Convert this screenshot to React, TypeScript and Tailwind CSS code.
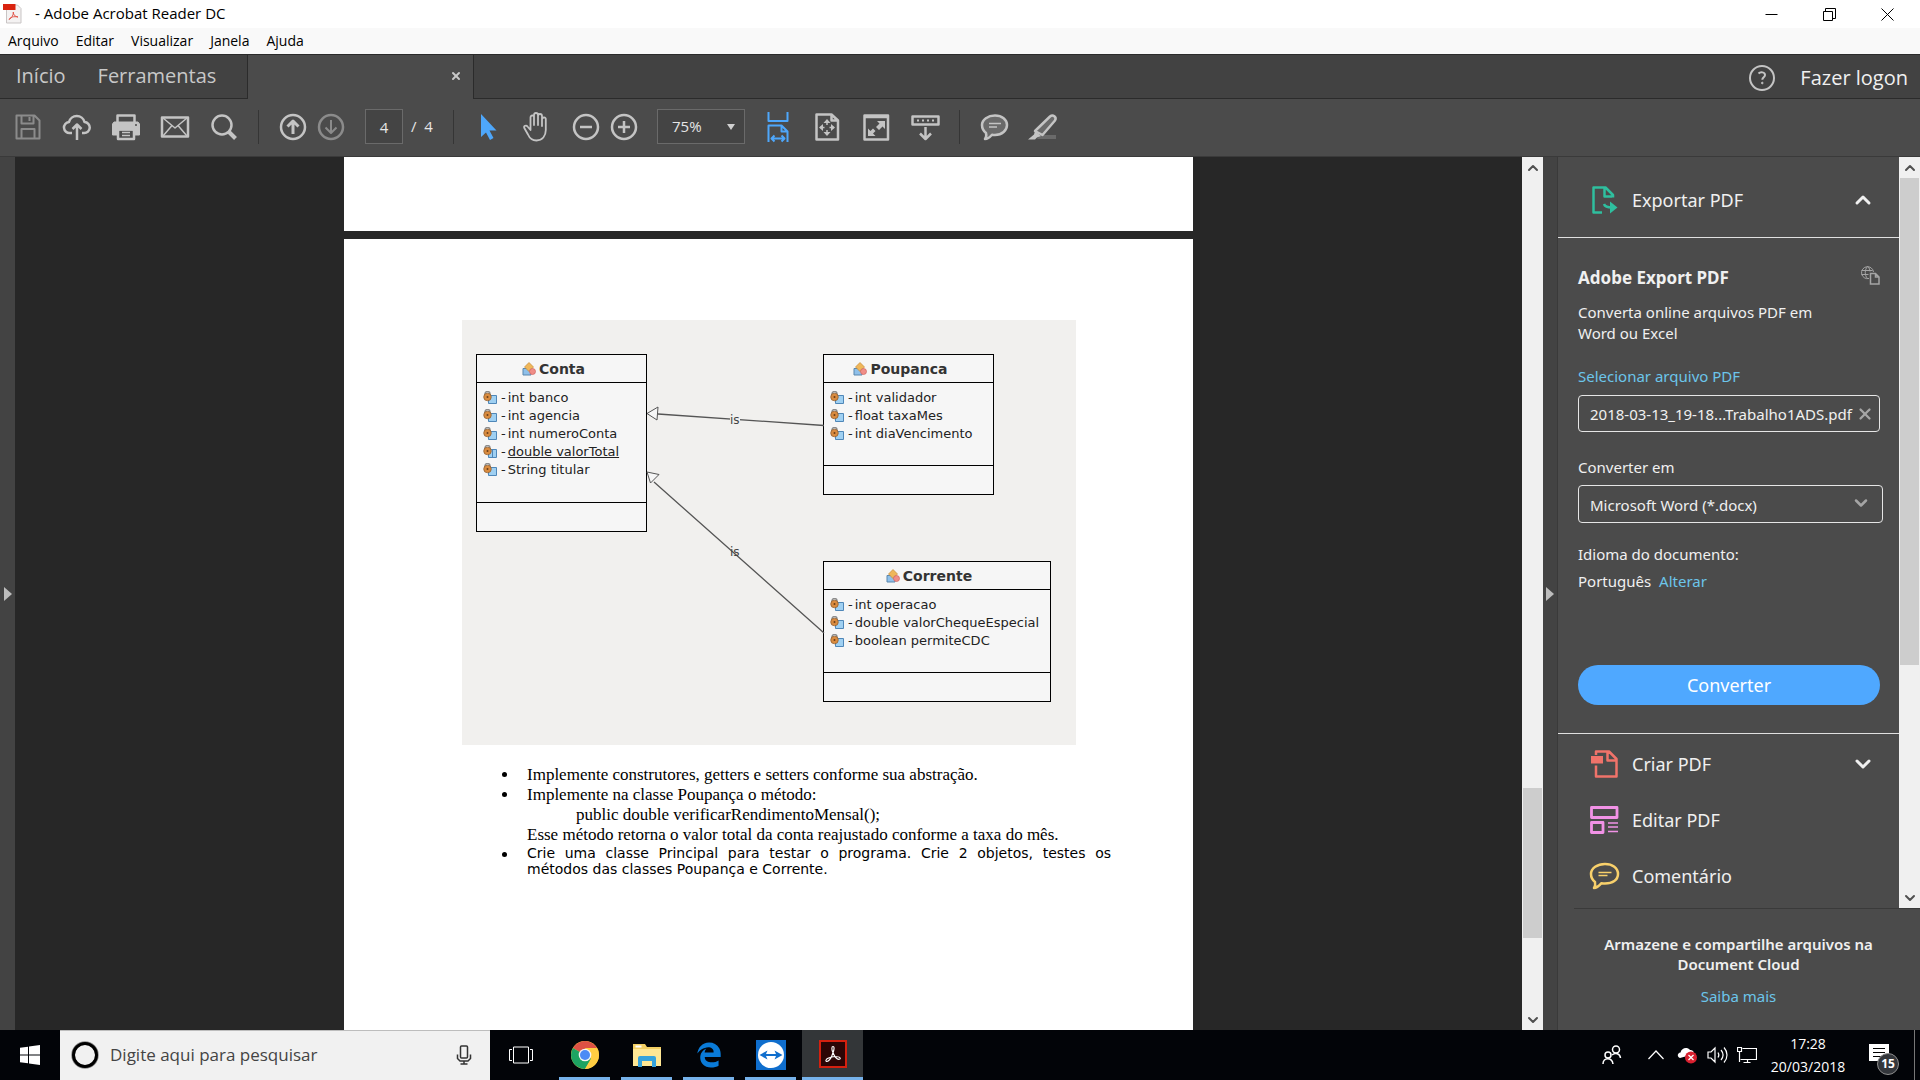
import type { ReactNode } from "react";
import { ChevronDown, ChevronUp, X } from "lucide-react";
import { FaEdgeLegacy } from "react-icons/fa";

type IconProps = { children: ReactNode; className?: string };

function Icon({ children, className = "size-8" }: IconProps) {
  return (
    <svg viewBox="0 0 32 32" className={className} fill="none" stroke="currentColor" strokeWidth="2" strokeLinejoin="round" aria-hidden="true">
      {children}
    </svg>
  );
}

function ToolButton({ label, children, className = "text-[#c4c4c4]" }: { label: string; children: ReactNode; className?: string }) {
  return (
    <button type="button" aria-label={label} className={`size-8 shrink-0 ${className}`}>
      <Icon>{children}</Icon>
    </button>
  );
}

function Separator() {
  return <div className="mx-[18px] h-[34px] w-px shrink-0 bg-[#353535]" />;
}

const menus = ["Arquivo", "Editar", "Visualizar", "Janela", "Ajuda"];

function TitleBar() {
  return (
    <header className="shrink-0 font-['Open_Sans',sans-serif] text-sm text-black">
      <div className="flex h-7 items-center bg-white">
        <svg viewBox="0 0 20 20" className="ml-[3px] size-5" fill="none" aria-hidden="true">
          <path d="M3.500 1h11l3.500 3.500v14.500h-14.500z" fill="#f4f2f2" stroke="#c9c5c5" />
          <path d="M0 0h12.500v6H0z" fill="#d9230f" />
          <path d="M6 15.500c3-1.500 4.500-4.500 4.300-7.500M6 15.500c1-2.500 5-3.300 9-2.500-3-.5-4.700-2-4.700-5" stroke="#e2574c" />
        </svg>
        <h1 className="ml-3 text-[15px]">- Adobe Acrobat Reader DC</h1>
        <div className="mr-1 ml-auto flex">
          <button type="button" aria-label="Minimizar" className="grid h-7 w-[58px] place-items-center">
            <svg viewBox="0 0 13 13" className="size-[13px]" stroke="currentColor" aria-hidden="true"><path d="M0.500 6.500h12" /></svg>
          </button>
          <button type="button" aria-label="Restaurar" className="grid h-7 w-[58px] place-items-center">
            <svg viewBox="0 0 13 13" className="size-[13px]" fill="none" stroke="currentColor" aria-hidden="true">
              <path d="M0.500 3.500h9v9h-9zM2.500 3.500v-3h10v10h-3" />
            </svg>
          </button>
          <button type="button" aria-label="Fechar" className="grid h-7 w-[58px] place-items-center">
            <svg viewBox="0 0 13 13" className="size-[13px]" stroke="currentColor" aria-hidden="true"><path d="M0.500 0.500l12 12M12.500 0.500l-12 12" /></svg>
          </button>
        </div>
      </div>
      <nav className="flex h-[26px] items-center gap-[17px] bg-[#f9f9f9] pl-2">
        {menus.map((menu) => (
          <button key={menu} type="button">{menu}</button>
        ))}
      </nav>
    </header>
  );
}

function TabBar() {
  return (
    <div className="flex h-[45px] shrink-0 border-t border-[#2b2b2b] bg-[#424242] font-['Open_Sans',sans-serif] text-xl text-[#c8c8c8]">
      <div className="flex w-[248px] items-center gap-8 border-r border-b border-[#2b2b2b] pl-4 pb-0.5">
        <button type="button">Início</button>
        <button type="button">Ferramentas</button>
      </div>
      <div className="flex w-[225px] items-center justify-end bg-[#4b4b4b] pr-[11px] pb-0.5">
        <button type="button" aria-label="Fechar guia"><X className="size-3" strokeWidth={4} /></button>
      </div>
      <div className="flex flex-1 items-center justify-end border-b border-l border-[#2b2b2b] pt-0.5 pr-3 text-[#f0f0f0]">
        <button type="button" aria-label="Ajuda" className="mr-6 text-[#c4c4c4]">
          <svg viewBox="0 0 28 28" className="size-7" fill="none" stroke="currentColor" strokeWidth="2" aria-hidden="true">
            <circle cx="14" cy="14" r="12" />
            <path d="M10.500 9.500c2-2 6.500-1.500 6.500 1.500 0 2.200-2.700 2.300-2.700 4.800" />
            <circle cx="14.300" cy="19" r="0.800" fill="currentColor" strokeWidth="1" />
          </svg>
        </button>
        <button type="button" className="font-medium">Fazer logon</button>
      </div>
    </div>
  );
}

function Toolbar() {
  return (
    <div className="flex h-[58px] shrink-0 items-center border-b border-[#3a3a3a] bg-[#4b4b4b] pb-0.5 pl-3 font-['Open_Sans',sans-serif] text-base text-[#e6e6e6]">
      <div className="flex gap-[17px]">
        <ToolButton label="Salvar" className="text-[#8b8b8b]">
          <path d="M4.500 4.500h18l5 5v18h-23zM9.500 4.500v8h12v-8M17.500 6v4M9.500 27v-9h13v9" />
        </ToolButton>
        <ToolButton label="Enviar para a nuvem">
          <path d="M11 22H9a5.500 5.500 0 0 1-1-11 8 8 0 0 1 15.500 0A5.500 5.500 0 0 1 23 22h-2M16 29V14M11.500 18l4.500-4.500 4.500 4.500" strokeWidth="2.500" />
        </ToolButton>
        <ToolButton label="Imprimir">
          <path d="M7.500 11V4.500h17V11" strokeWidth="2.500" />
          <path d="M4 11h24l1.500 2v11H25v-5H7v5H2.500V13z" fill="currentColor" strokeWidth="1" />
          <path d="M8 18.500h16v9.500H8z" strokeWidth="2.500" />
          <path d="M12 21.500h8M12 24.500h8" strokeWidth="1.500" />
          <circle cx="26" cy="14" r="1" fill="#4b4b4b" stroke="none" />
        </ToolButton>
        <ToolButton label="E-mail">
          <path d="M3 6.500h26v19H3z" strokeWidth="2.500" />
          <path d="M4 7l12 10L28 7M4 25l9-10.500M28 25l-9-10.500" strokeWidth="1.500" />
        </ToolButton>
        <ToolButton label="Procurar">
          <circle cx="14" cy="14" r="9.500" strokeWidth="2.500" />
          <path d="M20.500 20.500l7 7" strokeWidth="4" />
        </ToolButton>
      </div>
      <Separator />
      <div className="flex gap-1.5">
        <ToolButton label="Página anterior">
          <circle cx="16" cy="16" r="12" strokeWidth="2.500" />
          <path d="M16 23V10M10.500 15.500L16 10l5.500 5.500" strokeWidth="3" />
        </ToolButton>
        <ToolButton label="Próxima página" className="text-[#8b8b8b]">
          <circle cx="16" cy="16" r="12" strokeWidth="2.500" />
          <path d="M16 9v13M10.500 16.500L16 22l5.500-5.500" />
        </ToolButton>
      </div>
      <input aria-label="Página" defaultValue="4" className="ml-[18px] h-[35px] w-[38px] border border-[#6a6a6a] bg-[#444] text-center text-[15px]" />
      <span className="ml-2 w-6 text-[15px] whitespace-pre">/  4</span>
      <Separator />
      <div className="flex gap-[17px]">
        <ToolButton label="Selecionar" className="text-[#4ea7fb]">
          <path d="M9 3v23l5-4.500 4 7.500 3.500-2-4-7.500h7z" fill="currentColor" stroke="none" />
        </ToolButton>
        <ToolButton label="Mão">
          <path d="M9.500 19V6.500q0-2 1.800-2t1.700 2V14V4q0-2 2-2t2 2v10V5q0-2 2-2t2 2v10V8.500q0-2 2-2t1.800 2V19c0 6-3.500 10.500-9.300 10.500-5 0-7-2.500-8.500-6L3.300 17c-.9-2.200 1.900-3.300 3.200-1.500z" strokeWidth="1.800" />
        </ToolButton>
      </div>
      <div className="ml-[17px] flex gap-1.5">
        <ToolButton label="Reduzir">
          <circle cx="16" cy="16" r="12" strokeWidth="2.500" />
          <path d="M10 16h12" strokeWidth="2.500" />
        </ToolButton>
        <ToolButton label="Ampliar">
          <circle cx="16" cy="16" r="12" strokeWidth="2.500" />
          <path d="M10 16h12M16 10v12" strokeWidth="2.500" />
        </ToolButton>
      </div>
      <div className="relative ml-[17px]">
        <select aria-label="Zoom" className="h-[35px] w-[88px] appearance-none border border-[#6a6a6a] bg-[#444] pl-3.5 text-[15px]">
          <option>75%</option>
        </select>
        <svg viewBox="0 0 8 6" className="pointer-events-none absolute top-[15px] right-2.5 h-1.5 w-2 text-[#d0d0d0]" aria-hidden="true"><path d="M0 0h8L4 6z" fill="currentColor" /></svg>
      </div>
      <div className="ml-[17px] flex gap-[17px]">
        <ToolButton label="Ajustar à largura" className="text-[#4ea7fb]">
          <path d="M6.500 1v9h19V1M6.500 31V14.500h13l6 6V31M19.500 14.500v6h6M10 27.500h12M12.500 24.500l-3 3 3 3M19.500 24.500l3 3-3 3" />
        </ToolButton>
        <ToolButton label="Ajustar página">
          <path d="M5.500 3.500h15l6.500 6v19H5.500zM20.500 3.500v6H27" strokeWidth="2.500" />
          <path d="M16 10v13M9.500 16.500h13" strokeWidth="1.500" strokeDasharray="4 5" />
          <path d="M16 8l3.500 4h-7zM16 25l3.500-4h-7zM8 16.500l4-3.500v7zM24 16.500L20 13v7z" fill="currentColor" stroke="none" />
        </ToolButton>
        <ToolButton label="Tela cheia">
          <path d="M4.500 4.500h23.500v24H4.500zM5 6h23" strokeWidth="2.500" />
          <path d="M17 10h8v8l-2.500-2.500-3.500 3.500-3-3 3.500-3.500zM8 17.500l2.500 2.500 2.500-2.500 2.500 2.500-2.500 2.500 2.500 2.500H8z" fill="currentColor" stroke="none" />
        </ToolButton>
        <ToolButton label="Modo de leitura">
          <path d="M3.500 5.500h26v8h-26z" strokeWidth="2.500" />
          <path d="M8 9.500h18" strokeDasharray="2 3" />
          <path d="M16.500 16v12M11 22.500l5.500 5.500 5.500-5.500" strokeWidth="2.500" />
        </ToolButton>
      </div>
      <Separator />
      <div className="flex gap-[17px]">
        <ToolButton label="Adicionar comentário">
          <path d="M17 4.500c7 0 12 4 12 9.500s-5 10-12 10c-1 0-2 0-3-.3C12 26 9.500 28 7 28c1.200-1.500 1.500-4 1-6C5.500 20 4 17 4 14c0-5.500 6-9.500 13-9.500z" fill="#6a6a6a" strokeWidth="2.500" />
          <path d="M11 12.500h12M11 16h8" strokeWidth="1.500" />
        </ToolButton>
        <ToolButton label="Realçar">
          <path d="M13 24h16v4H10z" fill="#6a6a6a" stroke="none" />
          <path d="M8 20L23 5.500c3-2.500 7 .500 5 4L15.500 24z" fill="#6a6a6a" strokeWidth="2.500" />
          <path d="M8 20l6 5-4 1.500-2 2H1l6-5z" fill="currentColor" stroke="none" />
        </ToolButton>
      </div>
    </div>
  );
}

type UmlClass = { name: string; box: string; fields: { text: string; isStatic?: boolean }[] };

const classes: UmlClass[] = [
  {
    name: "Conta",
    box: "left-3.5 top-[34px] w-[171px] h-[178px]",
    fields: [
      { text: "int banco" },
      { text: "int agencia" },
      { text: "int numeroConta" },
      { text: "double valorTotal", isStatic: true },
      { text: "String titular" },
    ],
  },
  {
    name: "Poupanca",
    box: "left-[361px] top-[34px] w-[171px] h-[141px]",
    fields: [{ text: "int validador" }, { text: "float taxaMes" }, { text: "int diaVencimento" }],
  },
  {
    name: "Corrente",
    box: "left-[361px] top-[241px] w-[228px] h-[141px]",
    fields: [{ text: "int operacao" }, { text: "double valorChequeEspecial" }, { text: "boolean permiteCDC" }],
  },
];

function UmlBox({ uml }: { uml: UmlClass }) {
  return (
    <div className={`absolute flex flex-col border border-black bg-[#f6f6f6] ${uml.box}`}>
      <div className="flex h-7 shrink-0 items-center justify-center gap-[3px] border-b border-black pr-4 text-sm font-bold text-[#333]">
        <svg viewBox="0 0 14 14" className="size-3.5" aria-hidden="true">
          <path d="M1 6.500h8v6.500H1z" fill="#8fc0ea" stroke="#5b87ad" />
          <path d="M7 .500l4.500 4.500L7 9.500 2.500 5z" fill="#efb75a" stroke="#c58a35" strokeWidth=".7" />
          <circle cx="10.500" cy="9.500" r="3" fill="#f08e88" stroke="#d0645f" strokeWidth=".7" />
        </svg>
        {uml.name}
      </div>
      <ul className="flex-1 pt-1.5 pl-1.5 text-[13px] leading-[18px] whitespace-nowrap text-[#222]">
        {uml.fields.map((field) => (
          <li key={field.text} className="flex items-center">
            <svg viewBox="0 0 14 14" className="mr-1 size-3.5" aria-hidden="true">
              <path d="M5.500 4.500h8v8h-8z" fill="#9fd0f2" stroke="#4f87b8" />
              {field.isStatic && <path d="M9.500 4.500v8" stroke="#4f87b8" />}
              <path d="M2 5V3a2.500 2.500 0 0 1 5 0v2" fill="none" stroke="#8c8c8c" strokeWidth="1.500" />
              <circle cx="4.500" cy="6" r="3.800" fill="#d98b3f" stroke="#8a5a2c" strokeWidth=".7" />
              <circle cx="4.500" cy="6" r="1" fill="#6b3d16" />
            </svg>
            <span className="mr-0.5">-</span>
            <span className={field.isStatic ? "underline" : ""}>{field.text}</span>
          </li>
        ))}
      </ul>
      <div className="h-[29px] shrink-0 border-t border-black" />
    </div>
  );
}

function Diagram() {
  return (
    <div className="relative ml-[118px] h-[425px] w-[614px] bg-[#f1f0ee] font-['DejaVu_Sans',sans-serif]">
      {classes.map((uml) => (
        <UmlBox key={uml.name} uml={uml} />
      ))}
      <svg viewBox="0 0 614 425" className="absolute inset-0 h-full w-full" fill="none" stroke="#555" aria-hidden="true">
        <path d="M196 94l166 11.500M192 162l170 151" strokeWidth="1.300" />
        <path d="M185 93.500l11-6.500-1 13zM185 152l12 2.500-8.500 8.500z" fill="#f6f6f6" />
      </svg>
      <span className="absolute top-[92px] left-[268px] bg-[#f1f0ee] text-xs leading-4 text-[#444]">is</span>
      <span className="absolute top-56 left-[268px] text-xs leading-4 text-[#444]">is</span>
    </div>
  );
}

function Bullet() {
  return <span className="mt-[7px] mr-5 size-[5px] shrink-0 rounded-full bg-black" />;
}

function DocumentView() {
  return (
    <main className="flex min-w-0 flex-1 flex-col gap-2 overflow-hidden bg-[#272727]">
      <div className="mx-auto h-[74px] w-[849px] shrink-0 bg-white" />
      <article className="mx-auto w-[849px] flex-1 bg-white pt-[81px] text-black">
        <Diagram />
        <ul className="mr-[82px] ml-[158px] pt-5 font-['Liberation_Serif',serif] text-[17px] leading-5">
          <li className="flex"><Bullet />Implemente construtores, getters e setters conforme sua abstração.</li>
          <li className="flex">
            <Bullet />
            <div>
              <p>Implemente na classe Poupança o método:</p>
              <p className="pl-[49px]">public double verificarRendimentoMensal();</p>
              <p>Esse método retorna o valor total da conta reajustado conforme a taxa do mês.</p>
            </div>
          </li>
          <li className="flex font-['DejaVu_Sans',sans-serif] text-sm leading-4">
            <Bullet />
            <p className="flex-1 text-justify">
              Crie uma classe Principal para testar o programa. Crie 2 objetos, testes os métodos das classes Poupança e Corrente.
            </p>
          </li>
        </ul>
      </article>
    </main>
  );
}

function Scrollbar({ before, thumb, after }: { before: string; thumb: string; after: string }) {
  return (
    <div className="flex w-[21px] shrink-0 flex-col items-center bg-[#f0f0f0] text-[#505050]">
      <button type="button" aria-label="Rolar para cima" className="grid h-[21px] w-full shrink-0 place-items-center"><ChevronUp className="size-4" strokeWidth={3} /></button>
      <div className={before} />
      <div className={`w-[19px] bg-[#cdcdcd] ${thumb}`} />
      <div className={after} />
      <button type="button" aria-label="Rolar para baixo" className="grid h-[21px] w-full shrink-0 place-items-center"><ChevronDown className="size-4" strokeWidth={3} /></button>
    </div>
  );
}

function ToolsPanel() {
  return (
    <aside className="flex w-[363px] shrink-0 flex-col border-l border-[#3a3a3a] bg-[#4b4b4b] font-['Noto_Sans',sans-serif] text-[15px] leading-[21px] text-[#f0f0f0]">
      <div className="flex min-h-0 flex-1">
        <div className="min-w-0 flex-1">
          <button type="button" className="flex h-20 w-full items-center pt-1.5 pl-[30px] text-lg">
            <Icon className="mr-3 size-8 text-[#2fbf9f]">
              <path d="M14 28.500H5.500v-25h12l7.500 7.500v2.500M16.500 4v8.500H24" strokeWidth="2.500" />
              <path d="M16 20c1 3 4 3.500 8 3.500" strokeWidth="2.500" />
              <path d="M22 17.500l7.500 6-7.500 6z" fill="currentColor" stroke="none" />
            </Icon>
            Exportar PDF
            <ChevronUp className="mr-6 ml-auto size-6" strokeWidth={3} />
          </button>
          <section className="flex h-[497px] flex-col border-y border-[#e0e0e0] pr-[19px] pl-5 pt-[29px]">
            <div className="flex items-start justify-between">
              <h2 className="text-[17px] leading-[21px] font-bold">Adobe Export PDF</h2>
              <svg viewBox="0 0 20 20" className="-mt-0.5 size-5 text-[#a5a5a5]" fill="none" stroke="currentColor" aria-hidden="true">
                <path d="M9 13.500A6 6 0 1 1 13.500 7M1.500 5.500h11M1.500 9.500h7M7.500 1.500c-3 3-3 9 0 12M7.500 1.500c2 1.500 2.500 3.500 2.500 5" />
                <path d="M10.500 8.500h5l3.500 3.500v7h-8.500zM15.500 8.500V12H19" strokeWidth="1.500" />
              </svg>
            </div>
            <p className="mt-3.5 w-64">Converta online arquivos PDF em Word ou Excel</p>
            <label htmlFor="arquivo" className="mt-[22px] text-[#6cc5ea]">Selecionar arquivo PDF</label>
            <div className="relative mt-2">
              <input id="arquivo" readOnly value="2018-03-13_19-18...Trabalho1ADS.pdf" className="h-[37px] w-full rounded-[4px] border border-[#e6e6e6] pl-[11px]" />
              <button type="button" aria-label="Remover arquivo" className="absolute top-2.5 right-1.5 text-[#a5a5a5]"><X className="size-[18px]" strokeWidth={3} /></button>
            </div>
            <label htmlFor="formato" className="mt-[25px]">Converter em</label>
            <div className="relative -mr-[3px] mt-[7px]">
              <select id="formato" className="h-[38px] w-full appearance-none rounded-[4px] border border-[#e6e6e6] pt-0.5 pl-[11px]">
                <option>Microsoft Word (*.docx)</option>
              </select>
              <ChevronDown className="pointer-events-none absolute top-2 right-3 size-5 text-[#a5a5a5]" strokeWidth={3} />
            </div>
            <p className="mt-[21px]">Idioma do documento:</p>
            <p className="mt-1.5">Português <a href="#idioma" className="ml-1 text-[#6cc5ea]">Alterar</a></p>
            <button type="button" className="mt-auto mb-7 h-10 shrink-0 rounded-full bg-[#4fa8ff] text-lg text-white">Converter</button>
          </section>
          <nav className="flex flex-col pt-0.5 text-lg">
            <button type="button" className="flex h-14 items-center pl-[30px]">
              <Icon className="mr-3 size-8 text-[#f0736a]">
                <path d="M8 7V3.500h13l7.500 7.500v17.500H8V17.500M19.500 4v8.500H28" strokeWidth="2.500" />
                <path d="M3 8h12v7.500H3z" fill="currentColor" stroke="none" />
              </Icon>
              Criar PDF
              <ChevronDown className="mr-6 ml-auto size-6" strokeWidth={3} />
            </button>
            <button type="button" className="flex h-14 items-center pl-[30px]">
              <Icon className="mr-3 size-8 text-[#f192e6]">
                <path d="M3.500 3.500h25.500v10H3.500zM3.500 18.500h11.500v10H3.500z" strokeWidth="2.800" />
                <path d="M20 19h10M20 23h10M20 27.500h10" strokeWidth="1.500" />
              </Icon>
              Editar PDF
            </button>
            <button type="button" className="flex h-14 items-center pl-[30px]">
              <Icon className="mr-3 size-8 text-[#f8d06b]">
                <path d="M17 4c7.500 0 13 4 13 10s-5.500 9.500-13 9.500c-1.500 0-2.500 0-3.500-.3C11 26 8.500 28 6 28c1.500-2 1.500-3.500 1-6C4.500 20 3 17.500 3 14 3 8 9.500 4 17 4z" strokeWidth="2.500" />
                <path d="M10.500 12.500h13M10.500 15.500h9" strokeWidth="1.500" />
              </Icon>
              Comentário
            </button>
          </nav>
        </div>
        <Scrollbar before="hidden" thumb="grow-[487]" after="grow-[222]" />
      </div>
      <footer className="ml-4 flex h-[122px] shrink-0 flex-col items-center border-t border-[#3a3a3a] pt-[25px] pr-[17px] text-center leading-5">
        <p className="w-[300px] font-semibold">Armazene e compartilhe arquivos na Document Cloud</p>
        <a href="#saiba-mais" className="mt-3 text-[#6cc5ea]">Saiba mais</a>
      </footer>
    </aside>
  );
}

function ChromeLogo() {
  return (
    <svg viewBox="0 0 28 28" className="size-7" aria-hidden="true">
      <circle cx="14" cy="14" r="14" fill="#ffcd42" />
      <path d="M14 14L1.900 7A14 14 0 0 1 26.100 7z" fill="#dd5144" />
      <path d="M14 14L1.900 7A14 14 0 0 0 14 28l6.500-10z" fill="#1da362" />
      <path d="M14 7h12.100A14 14 0 0 1 14 28l6-10.500z" fill="#ffcd42" />
      <circle cx="14" cy="14" r="6.300" fill="#f5f5f5" />
      <circle cx="14" cy="14" r="5" fill="#4c8bf5" />
    </svg>
  );
}

function ExplorerLogo() {
  return (
    <svg viewBox="0 0 28 24" className="h-6 w-7" aria-hidden="true">
      <path d="M0 1h12l2 3h14v19H0z" fill="#f3cf63" />
      <path d="M2.500 2.500h6v2h-6z" fill="#fff" />
      <path d="M0 6h28v17H0z" fill="#ffe794" />
      <path d="M5 24v-9q0-2 2-2h14q2 0 2 2v9h-4v-6H9v6z" fill="#36a3dc" />
    </svg>
  );
}

function TeamViewerLogo() {
  return (
    <svg viewBox="0 0 30 30" className="size-[30px]" aria-hidden="true">
      <path d="M0 0h30v30H0z" fill="#0f6ecd" />
      <circle cx="15" cy="15" r="13" fill="#fff" />
      <path d="M3.500 15l8-4.500-1.500 3.500h10l-1.500-3.500 8 4.500-8 4.500L20 16H10l1.500 3.500z" fill="#0f6ecd" />
    </svg>
  );
}

function AcrobatLogo() {
  return (
    <svg viewBox="0 0 28 28" className="size-7" fill="none" aria-hidden="true">
      <path d="M1 1h26v26H1z" fill="#2b0505" stroke="#d4200f" strokeWidth="2" />
      <path d="M14 12.500c-1.500-3-1.500-6 0-6s1.300 3 0 6c-1 3.500-3.500 8.500-6 9-1.700 0-1.500-2 1-3.200 3-1.500 7-2 9.500-1.600 3 .3 3.500 2.300 1.800 2.600-2.300.3-5-3.300-6.300-6.800z" stroke="#fff" strokeWidth="1.100" />
    </svg>
  );
}

const apps = [
  { name: "Google Chrome", logo: <ChromeLogo /> },
  { name: "Explorador de Arquivos", logo: <ExplorerLogo /> },
  { name: "Microsoft Edge", logo: <FaEdgeLegacy className="size-[26px] text-[#0a7bd8]" /> },
  { name: "TeamViewer", logo: <TeamViewerLogo /> },
];

function Taskbar() {
  return (
    <footer className="flex h-[50px] shrink-0 bg-[#020408] font-['Open_Sans',sans-serif] text-white">
      <button type="button" aria-label="Iniciar" className="grid w-[60px] place-items-center">
        <svg viewBox="0 0 20 20" className="size-5" fill="currentColor" aria-hidden="true">
          <path d="M0 2.800L8 1.700v7.800H0zM9 1.500L20 0v9.500H9zM0 10.500h8v7.800l-8-1.100zM9 10.500h11V20L9 18.500z" />
        </svg>
      </button>
      <div className="flex w-[430px] items-center border-t border-[#bdbdbd] bg-[#f1f1f1] pr-4 pb-px pl-[11px] text-[#333]">
        <svg viewBox="0 0 28 28" className="size-7" fill="none" aria-hidden="true">
          <circle cx="14" cy="14" r="12" stroke="#8a8a8a" strokeWidth="3.500" />
          <circle cx="14" cy="14" r="11.500" stroke="#000" strokeWidth="3" />
        </svg>
        <input aria-label="Pesquisar" placeholder="Digite aqui para pesquisar" className="ml-[11px] min-w-0 flex-1 text-[17px] placeholder:text-[#444]" />
        <svg viewBox="0 0 20 20" className="size-5" fill="none" stroke="currentColor" strokeWidth="1.500" aria-hidden="true">
          <rect x="6.500" y="1" width="7" height="12" rx="1" />
          <path d="M3.500 9.500v4l2.500 2.500h8l2.500-2.500v-4M10 16v3M6.500 19h7" />
        </svg>
      </div>
      <button type="button" aria-label="Visão de tarefas" className="mr-2 grid w-[61px] place-items-center">
        <svg viewBox="0 0 24 18" className="h-[18px] w-6" fill="none" stroke="currentColor" aria-hidden="true">
          <path d="M4.500 1h15v16h-15zM3 3.500H.500v11H3M21 3.500h2.500v11H21" />
        </svg>
      </button>
      <div className="mr-1.5 flex gap-[11px]">
        {apps.map((app) => (
          <button key={app.name} type="button" aria-label={app.name} className="grid w-[51px] place-items-center border-b-[3px] border-[#76b2ea] pt-0.5">{app.logo}</button>
        ))}
      </div>
      <button type="button" aria-label="Adobe Acrobat Reader DC" className="grid w-[61px] place-items-center border-b-[3px] border-[#76b2ea] bg-[#333638]"><AcrobatLogo /></button>
      <div className="ml-auto flex items-center text-sm leading-[23px]">
        <svg viewBox="0 0 20 20" className="size-5" fill="none" stroke="currentColor" strokeWidth="1.500" aria-hidden="true">
          <circle cx="14" cy="4.500" r="3.500" />
          <circle cx="6" cy="10" r="3" />
          <path d="M1 19c0-7 9-7 10 0M10 10c3.500-3 8-1.500 8.500 3" />
        </svg>
        <svg viewBox="0 0 16 10" className="ml-[26px] h-2.5 w-4" fill="none" stroke="currentColor" strokeWidth="1.200" aria-hidden="true"><path d="M.500 9L8 1l7.500 8" /></svg>
        <svg viewBox="0 0 20 18" className="ml-[13px] h-[18px] w-5" fill="none" aria-hidden="true">
          <path d="M3 12c-3-1-3-5 .500-5.500C4.500 2 10 .500 13 4c3-.500 4 2 4 4z" fill="#fff" />
          <circle cx="14" cy="11.500" r="6" fill="#d8202f" />
          <path d="M11.500 9l5 5M16.500 9l-5 5" stroke="#fff" strokeWidth="1.300" />
        </svg>
        <svg viewBox="0 0 21 18" className="ml-2.5 h-[18px] w-[21px]" fill="none" stroke="currentColor" strokeWidth="1.200" aria-hidden="true">
          <path d="M1 6h3l4-4v14l-4-4H1zM11 6.500c1 1.500 1 3.500 0 5M14 4c2.500 3 2.500 7 0 10M17 1.500c4 4.500 4 10.500 0 15" />
        </svg>
        <svg viewBox="0 0 20 18" className="ml-[9px] h-[18px] w-5" fill="none" stroke="currentColor" strokeWidth="1.200" aria-hidden="true">
          <path d="M5.500 2.500H19.500v11h-16M6.500 16.500h7M10.500 13.500v3M.500 1.500h4v4h-4zM2.500 5.500v10.500" />
        </svg>
        <div className="ml-[13px] w-[76px] text-center">
          <p>17:28</p>
          <p>20/03/2018</p>
        </div>
        <button type="button" aria-label="Notificações" className="relative ml-[23px] size-8">
          <svg viewBox="0 0 32 32" className="size-8" aria-hidden="true">
            <path d="M0 5h20v17h-7l-4 4v-4H0z" fill="#fff" />
            <path d="M4 9.500h12M4 13.500h12M4 17.500h8" stroke="#000" />
          </svg>
          <span className="absolute top-3.5 left-2 grid size-[22px] place-items-center rounded-full border border-[#8d8d8d] bg-[#33363b] text-xs font-bold">15</span>
        </button>
        <div className="mr-[5px] ml-[13px] h-[50px] w-px bg-[#777]" />
      </div>
    </footer>
  );
}

export default function App() {
  return (
    <div className="flex h-screen flex-col overflow-hidden bg-[#4b4b4b]">
      <TitleBar />
      <TabBar />
      <Toolbar />
      <div className="flex min-h-0 flex-1">
        <button type="button" aria-label="Abrir painel de navegação" className="grid w-[15px] shrink-0 place-items-center bg-[#434343] text-[#bdbdbd]">
          <svg viewBox="0 0 8 14" className="h-3.5 w-2" fill="currentColor" aria-hidden="true"><path d="M0 0l8 7-8 7z" /></svg>
        </button>
        <DocumentView />
        <Scrollbar before="grow-[610]" thumb="grow-[150]" after="grow-[71]" />
        <button type="button" aria-label="Ocultar painel de ferramentas" className="grid w-3.5 shrink-0 place-items-center bg-[#434343] text-[#bdbdbd]">
          <svg viewBox="0 0 8 14" className="h-3.5 w-2" fill="currentColor" aria-hidden="true"><path d="M0 0l8 7-8 7z" /></svg>
        </button>
        <ToolsPanel />
      </div>
      <Taskbar />
    </div>
  );
}
